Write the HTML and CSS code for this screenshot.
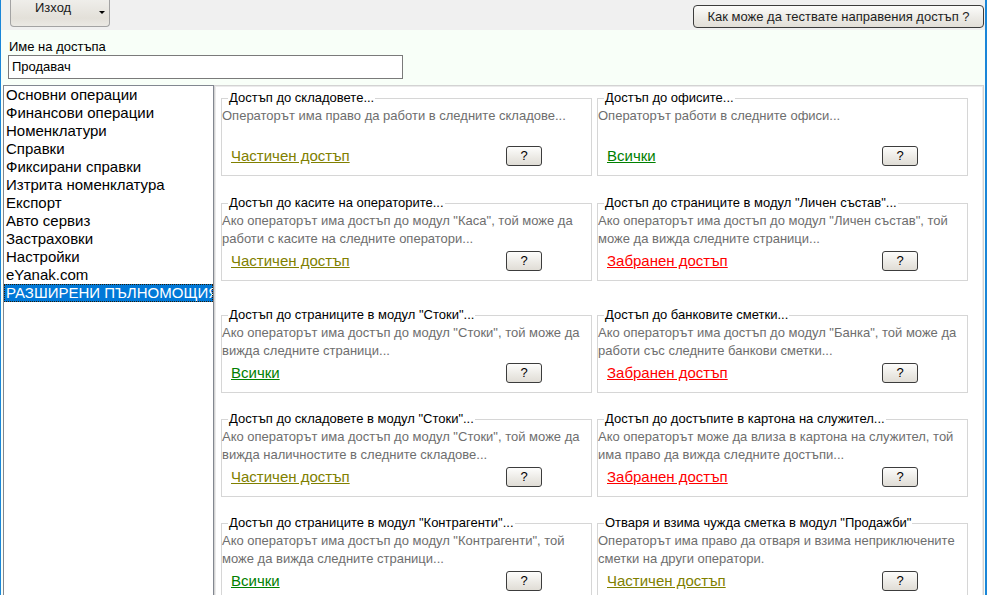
FILE: index.html
```html
<!DOCTYPE html>
<html lang="bg">
<head>
<meta charset="utf-8">
<title>Пълномощия</title>
<link rel="stylesheet" href="styles.css">
</head>
<body>
<div class="window">
  <div class="toolbar">
    <div class="exit-btn"><span>Изход</span><span class="caret"></span></div>
    <div class="test-btn">Как може да тествате направения достъп ?</div>
  </div>
  <div class="form">
    <div class="label">Име на достъпа</div>
    <div class="input">Продавач</div>
  </div>
  <div class="main">
    <div class="list">
      <div class="item">Основни операции</div>
      <div class="item">Финансови операции</div>
      <div class="item">Номенклатури</div>
      <div class="item">Справки</div>
      <div class="item">Фиксирани справки</div>
      <div class="item">Изтрита номенклатура</div>
      <div class="item">Експорт</div>
      <div class="item">Авто сервиз</div>
      <div class="item">Застраховки</div>
      <div class="item">Настройки</div>
      <div class="item">eYanak.com</div>
      <div class="item selected">РАЗШИРЕНИ ПЪЛНОМОЩИЯ</div>
    </div>
    <div class="panel">
      <div class="grid">
        <fieldset class="card">
          <legend>Достъп до складовете...</legend>
          <div class="body">
            <div class="desc">Операторът има право да работи в следните складове...</div>
            <div class="foot"><span class="cell"><a class="lnk partial">Частичен достъп</a></span><span class="q">?</span></div>
          </div>
        </fieldset>
        <fieldset class="card">
          <legend>Достъп до офисите...</legend>
          <div class="body">
            <div class="desc">Операторът работи в следните офиси...</div>
            <div class="foot"><span class="cell"><a class="lnk all">Всички</a></span><span class="q">?</span></div>
          </div>
        </fieldset>

        <fieldset class="card r2">
          <legend>Достъп до касите на операторите...</legend>
          <div class="body">
            <div class="desc">Ако операторът има достъп до модул "Каса", той може да<br>работи с касите на следните оператори...</div>
            <div class="foot"><span class="cell"><a class="lnk partial">Частичен достъп</a></span><span class="q">?</span></div>
          </div>
        </fieldset>
        <fieldset class="card r2">
          <legend>Достъп до страниците в модул "Личен състав"...</legend>
          <div class="body">
            <div class="desc">Ако операторът има достъп до модул "Личен състав", той<br>може да вижда следните страници...</div>
            <div class="foot"><span class="cell"><a class="lnk denied">Забранен достъп</a></span><span class="q">?</span></div>
          </div>
        </fieldset>

        <fieldset class="card r3">
          <legend>Достъп до страниците в модул "Стоки"...</legend>
          <div class="body">
            <div class="desc">Ако операторът има достъп до модул "Стоки", той може да<br>вижда следните страници...</div>
            <div class="foot"><span class="cell"><a class="lnk all">Всички</a></span><span class="q">?</span></div>
          </div>
        </fieldset>
        <fieldset class="card r3">
          <legend>Достъп до банковите сметки...</legend>
          <div class="body">
            <div class="desc">Ако операторът има достъп до модул "Банка", той може да<br>работи със следните банкови сметки...</div>
            <div class="foot"><span class="cell"><a class="lnk denied">Забранен достъп</a></span><span class="q">?</span></div>
          </div>
        </fieldset>

        <fieldset class="card">
          <legend>Достъп до складовете в модул "Стоки"...</legend>
          <div class="body">
            <div class="desc">Ако операторът има достъп до модул "Стоки", той може да<br>вижда наличностите в следните складове...</div>
            <div class="foot"><span class="cell"><a class="lnk partial">Частичен достъп</a></span><span class="q">?</span></div>
          </div>
        </fieldset>
        <fieldset class="card">
          <legend>Достъп до достъпите в картона на служител...</legend>
          <div class="body">
            <div class="desc">Ако операторът може да влиза в картона на служител, той<br>има право да вижда следните достъпи...</div>
            <div class="foot"><span class="cell"><a class="lnk denied">Забранен достъп</a></span><span class="q">?</span></div>
          </div>
        </fieldset>

        <fieldset class="card">
          <legend>Достъп до страниците в модул "Контрагенти"...</legend>
          <div class="body">
            <div class="desc">Ако операторът има достъп до модул "Контрагенти", той<br>може да вижда следните страници...</div>
            <div class="foot"><span class="cell"><a class="lnk all">Всички</a></span><span class="q">?</span></div>
          </div>
        </fieldset>
        <fieldset class="card">
          <legend>Отваря и взима чужда сметка в модул "Продажби"</legend>
          <div class="body">
            <div class="desc">Операторът има право да отваря и взима неприключените<br>сметки на други оператори.</div>
            <div class="foot"><span class="cell"><a class="lnk partial">Частичен достъп</a></span><span class="q">?</span></div>
          </div>
        </fieldset>
      </div>
    </div>
  </div>
</div>
</body>
</html>
```
FILE: styles.css
```css
* { box-sizing: border-box; }
html, body { margin: 0; padding: 0; overflow: hidden; }
body {
  font-family: "Liberation Sans", Arial, sans-serif;
  font-size: 13px;
  color: #000;
  background: #f8fff8;
}
.window {
  width: 987px;
  height: 595px;
  border-left: 1px solid #1a86d8;
  border-right: 2px solid #1a86d8;
  background: #f8fff8;
  overflow: hidden;
}
.toolbar {
  height: 30px;
  background: #f0f0f0;
  display: flex;
  justify-content: space-between;
  align-items: flex-start;
  padding: 0 1px 0 9px;
}
.exit-btn {
  width: 100px;
  height: 27px;
  border: 1px solid #a3a3a3;
  border-top: none;
  border-radius: 0 0 4px 4px;
  background: linear-gradient(#efeeea, #e3e0d9 70%, #ebe9e4);
  display: flex;
  padding-left: 24px;
  line-height: 16px;
  color: #1a1a1a;
}
.caret {
  margin-left: auto;
  margin-right: 4px;
  margin-top: 11px;
  width: 0;
  height: 0;
  border-left: 3px solid transparent;
  border-right: 3px solid transparent;
  border-top: 3px solid #000;
}
.test-btn {
  margin-top: 5px;
  width: 291px;
  height: 23px;
  border: 1px solid #3c3c3c;
  border-radius: 4px;
  background: linear-gradient(#fcfcfb, #ebe9e4 60%, #e2dfd8);
  text-align: center;
  line-height: 21px;
  color: #1e1e1e;
}
.form {
  padding: 9px 0 0 7px;
}
.label {
  line-height: 16px;
  padding-left: 1px;
}
.input {
  width: 395px;
  height: 24px;
  border: 1px solid #7a7a7a;
  background: #fff;
  padding-left: 3px;
  line-height: 22px;
}
.main {
  display: flex;
  margin-top: 6px;
  padding-left: 2px;
}
.list {
  width: 211px;
  height: 520px;
  flex: none;
  border: 1px solid #828790;
  background: #fff;
  overflow: hidden;
  font-size: 15px;
}
.item {
  height: 18px;
  line-height: 18px;
  padding-left: 2px;
  white-space: nowrap;
}
.item.selected {
  background: #0078d7;
  color: #fff;
  outline: 1px dotted #2b1d05;
  outline-offset: -1px;
}
.panel {
  flex: 1;
  margin-right: 1px;
  height: 520px;
  border: 1px solid #d3d3d3;
  box-shadow: inset 0 0 0 1px #ebebeb;
  background: #fff;
  padding: 4px 0 0 6px;
}
.grid {
  display: grid;
  grid-template-columns: 371px 371px;
  column-gap: 5px;
  row-gap: 18px;
}
.card {
  margin: 0;
  padding: 0;
  border: 1px solid #d6d6d6;
  min-width: 0;
}
.card.r2 { margin-top: 1px; }
.card.r3 { margin-top: 8px; }
.card legend {
  margin-left: 6px;
  padding: 0 1px;
  line-height: 16px;
  font-size: 13px;
  color: #000;
}
.body {
  height: 69px;
  display: flex;
  flex-direction: column;
  padding-top: 1px;
}
.desc {
  line-height: 18px;
  color: #6e6e6e;
  white-space: nowrap;
}
.foot {
  margin-top: auto;
  margin-bottom: 9px;
  height: 20px;
  display: grid;
  grid-template-columns: 284px 36px;
}
.cell {
  padding-left: 9px;
  line-height: 20px;
}
.lnk {
  font-size: 15px;
  text-decoration: underline;
  cursor: pointer;
}
.lnk.partial { color: #808000; }
.lnk.all { color: #008000; }
.lnk.denied { color: #ff0000; }
.q {
  width: 36px;
  height: 20px;
  border: 1px solid #3c3c3c;
  border-radius: 3px;
  background: linear-gradient(#fdfdfc, #ebe9e4 60%, #e0ddd6);
  text-align: center;
  line-height: 18px;
  font-size: 13px;
}
```
